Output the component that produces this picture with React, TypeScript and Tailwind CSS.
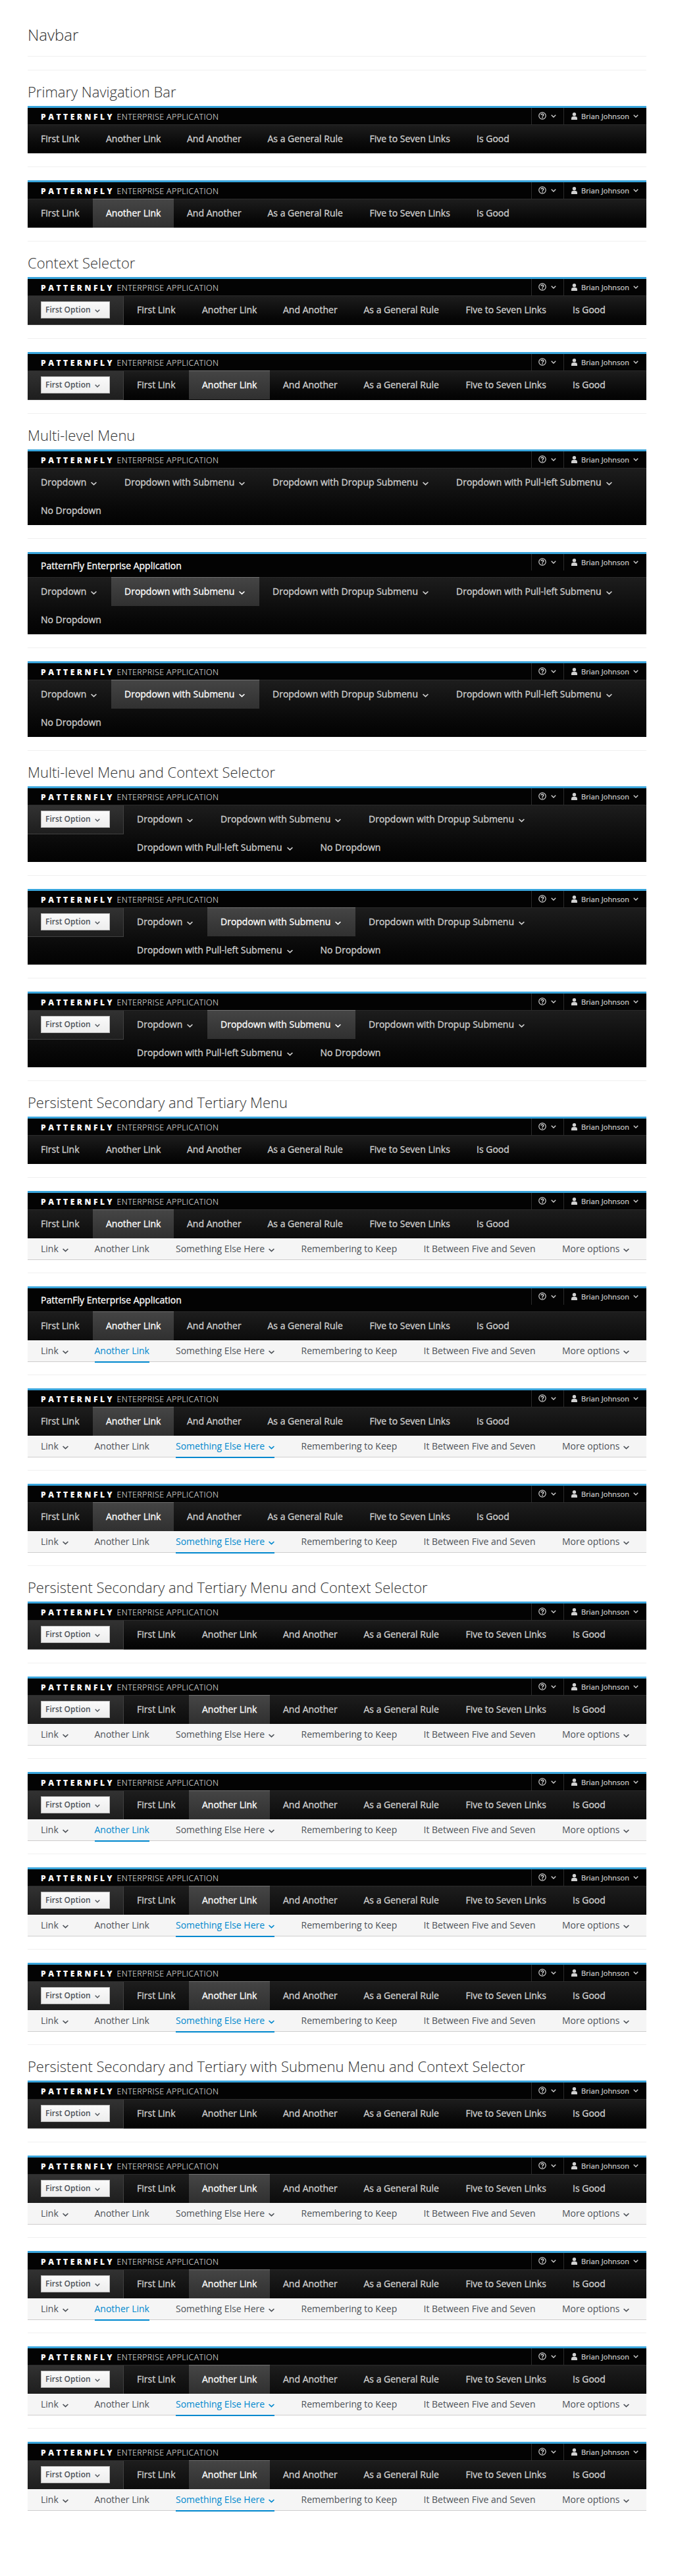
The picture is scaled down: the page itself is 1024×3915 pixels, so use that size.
import React from "react";

type Secondary = "none" | "another" | "something";

type Item = { label: string; caret?: boolean; width: string };

const LINKS: Item[] = [
  { label: "First Link", width: "w-[99px]" },
  { label: "Another Link", width: "w-[123px]" },
  { label: "And Another", width: "w-[122.5px]" },
  { label: "As a General Rule", width: "w-[155px]" },
  { label: "Five to Seven Links", width: "w-[162.5px]" },
  { label: "Is Good", width: "w-[90px]" },
];

const MENUS: Item[] = [
  { label: "Dropdown", caret: true, width: "w-[127px]" },
  { label: "Dropdown with Submenu", caret: true, width: "w-[225px]" },
  { label: "Dropdown with Dropup Submenu", caret: true, width: "w-[279px]" },
  { label: "Dropdown with Pull-left Submenu", caret: true, width: "w-[278.5px]" },
  { label: "No Dropdown", width: "w-[132px]" },
];

const SUBLINKS: Item[] = [
  { label: "Link", caret: true, width: "w-[81.5px]" },
  { label: "Another Link", width: "w-[123.5px]" },
  { label: "Something Else Here", caret: true, width: "w-[190.5px]" },
  { label: "Remembering to Keep", width: "w-[186px]" },
  { label: "It Between Five and Seven", width: "w-[210.5px]" },
  { label: "More options", caret: true, width: "w-[108px]" },
];

function Caret({ className = "" }: { className?: string }) {
  return (
    <svg viewBox="0 0 9 6" className={`shrink-0 ${className}`} fill="none" stroke="currentColor" strokeWidth="1.7">
      <path d="M0.6 1 L4.5 4.7 L8.4 1" />
    </svg>
  );
}

function Utility() {
  return (
    <div className="flex h-[25px] text-[11px] leading-[25px] text-[#d1d1d1]">
      <div className="flex w-[49px] items-center border-l border-[#2b2b2b] pl-[10px]">
        <svg viewBox="0 0 12 12" className="mb-px h-3 w-3" fill="none" stroke="currentColor">
          <circle cx="6" cy="6" r="5.2" strokeWidth="1.2" />
          <path d="M4.1 4.7 C4.2 2.8 7.9 2.9 7.7 4.8 C7.6 5.9 6.1 5.9 6.1 7.2" strokeWidth="1.5" />
          <path d="M6.1 8 V9.4" strokeWidth="1.5" />
        </svg>
        <Caret className="mb-px ml-[6.5px] h-[5px] w-[8px]" />
      </div>
      <div className="flex w-[126px] items-center border-l border-[#2b2b2b] pl-[11px]">
        <svg viewBox="0 0 9 11" className="h-[11px] w-[9px]" fill="currentColor">
          <circle cx="4.5" cy="2.7" r="2.7" />
          <path d="M0 11 V8.6 Q0 6.4 2.4 6 H6.6 Q9 6.4 9 8.6 V11 Z" />
        </svg>
        <span className="ml-[6px] w-[73px] whitespace-nowrap tracking-[0.1px] [-webkit-text-stroke:0.2px_#d1d1d1]">
          Brian Johnson
        </span>
        <Caret className="mb-px ml-[6px] h-[5px] w-[8px]" />
      </div>
    </div>
  );
}

function Brand({ text }: { text?: boolean }) {
  if (text) {
    return (
      <div className="h-[35px] pl-5 text-[14px] leading-[35px] text-white [-webkit-text-stroke:0.3px_white]">
        PatternFly Enterprise Application
      </div>
    );
  }
  return (
    <div className="flex h-[25px] items-baseline pl-5 leading-[27px] text-white">
      <span className="w-[115.5px] whitespace-nowrap text-[12px] font-extrabold tracking-[3.55px]">PATTERNFLY</span>
      <span className="whitespace-nowrap text-[12.5px] font-light tracking-[0.36px]">ENTERPRISE APPLICATION</span>
    </div>
  );
}

function Selector({ last }: { last: boolean }) {
  return (
    <div
      className={`flex w-[146px] shrink-0 items-start border-r border-[#414141] bg-linear-to-b from-[#323232] to-[#1e1e1e] pl-5 pt-2 ${
        last ? "h-[43px]" : "h-[44px] border-b"
      }`}
    >
      <button className="flex h-[26px] w-[105px] items-center border border-[#b7b7b7] bg-linear-to-b from-[#fafafa] to-[#ededed] pl-[6px] text-[12px] font-semibold text-[#4d5258]">
        <span className="w-[69px] whitespace-nowrap text-left">First Option</span>
        <Caret className="ml-[6px] mt-[3px] h-[5px] w-[8px]" />
      </button>
    </div>
  );
}

function NavBar({
  menu,
  context,
  active,
  textBrand,
  secondary,
}: {
  menu?: boolean;
  context?: boolean;
  active?: boolean;
  textBrand?: boolean;
  secondary?: Secondary;
}) {
  const items = menu ? MENUS : LINKS;
  return (
    <nav className={`border-t-[3px] border-[#39a5dc] bg-[#030303] ${secondary ? "-mb-px" : ""}`}>
      <div className="flex justify-between">
        <Brand text={textBrand} />
        <Utility />
      </div>
      <div className="border-t border-[#2b2b2b] bg-linear-to-b from-[#1d1d1d] to-[#030303]">
        <div className={`flex items-start ${secondary ? "h-[43px]" : ""}`}>
          {context && <Selector last={!!secondary} />}
          <ul className="flex flex-1 flex-wrap">
            {items.map((item, i) => {
              const on = active && i === 1;
              return (
                <li
                  key={item.label}
                  className={`flex items-center pb-[2px] pl-5 text-[14px] ${item.width} ${
                    on
                      ? "-mt-px h-[44px] border-t border-[#717171] bg-linear-to-b from-[#454545] to-[#303030] text-white [-webkit-text-stroke:0.3px_white]"
                      : "h-[43px] text-[#d1d1d1] [-webkit-text-stroke:0.3px_#d1d1d1]"
                  }`}
                >
                  <span className="whitespace-nowrap">{item.label}</span>
                  {item.caret && <Caret className="ml-[7px] mt-[4px] h-[6px] w-[9px]" />}
                </li>
              );
            })}
          </ul>
        </div>
        {secondary && (
          <ul className="flex h-[33px] border-b border-[#cecdcd] bg-[#f5f5f5] pl-5">
            {SUBLINKS.map((item, i) => {
              const on = (secondary === "another" && i === 1) || (secondary === "something" && i === 2);
              return (
                <li key={item.label} className={`shrink-0 text-[14px] leading-[32px] ${item.width}`}>
                  <span
                    className={`inline-flex h-[33px] items-center whitespace-nowrap border-b-2 ${
                      on ? "border-[#0088ce] text-[#0088ce]" : "border-transparent text-[#4d5258]"
                    }`}
                  >
                    {item.label}
                    {item.caret && <Caret className="ml-[6px] mt-[4px] h-[6px] w-[9px]" />}
                  </span>
                </li>
              );
            })}
          </ul>
        )}
      </div>
    </nav>
  );
}

function Rule() {
  return <hr className="my-5 border-t border-[#f0f0f0]" />;
}

function Section({ title, last, children }: { title: string; last?: boolean; children: React.ReactNode }) {
  const count = React.Children.count(children);
  return (
    <section>
      <h2 className="mb-[10px] h-6 whitespace-nowrap text-[22px] font-light leading-[24px]">{title}</h2>
      {React.Children.map(children, (bar, i) => (
        <>
          {bar}
          {!(last && i === count - 1) && <Rule />}
        </>
      ))}
    </section>
  );
}

export default function App() {
  return (
    <main className="min-h-[3915px] bg-white px-[42px] pt-[41px] font-['Open_Sans',sans-serif] text-[#333]">
      <h1 className="h-[24px] text-[24px] font-light leading-[24px]">Navbar</h1>
      <Rule />
      <Rule />
      <Section title="Primary Navigation Bar">
        <NavBar />
        <NavBar active />
      </Section>
      <Section title="Context Selector">
        <NavBar context />
        <NavBar context active />
      </Section>
      <Section title="Multi-level Menu">
        <NavBar menu />
        <NavBar menu active textBrand />
        <NavBar menu active />
      </Section>
      <Section title="Multi-level Menu and Context Selector">
        <NavBar menu context />
        <NavBar menu context active />
        <NavBar menu context active />
      </Section>
      <Section title="Persistent Secondary and Tertiary Menu">
        <NavBar />
        <NavBar active secondary="none" />
        <NavBar active textBrand secondary="another" />
        <NavBar active secondary="something" />
        <NavBar active secondary="something" />
      </Section>
      <Section title="Persistent Secondary and Tertiary Menu and Context Selector">
        <NavBar context />
        <NavBar context active secondary="none" />
        <NavBar context active secondary="another" />
        <NavBar context active secondary="something" />
        <NavBar context active secondary="something" />
      </Section>
      <Section title="Persistent Secondary and Tertiary with Submenu Menu and Context Selector" last>
        <NavBar context />
        <NavBar context active secondary="none" />
        <NavBar context active secondary="another" />
        <NavBar context active secondary="something" />
        <NavBar context active secondary="something" />
      </Section>
    </main>
  );
}
